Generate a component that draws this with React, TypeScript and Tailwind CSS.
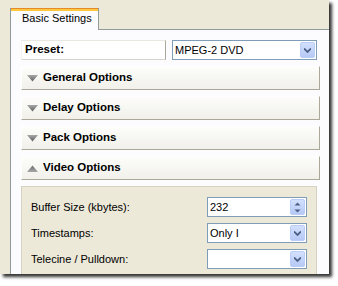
import React from 'react'

const font = { fontFamily: '"Liberation Sans", Arial, sans-serif' }

function Chevron() {
  return (
    <svg width="7" height="5" viewBox="0 0 7 5">
      <path d="M0 0.5 L3.5 4 L7 0.5" fill="none" stroke="#4d6185" strokeWidth="1.8" />
    </svg>
  )
}

function DropButton() {
  return (
    <div className="flex h-full w-[15px] items-center justify-center rounded-[2px] border border-[#b9cdf7] bg-gradient-to-b from-[#d3e0fd] to-[#b6c9f5]">
      <Chevron />
    </div>
  )
}

function SpinButton() {
  return (
    <div className="flex h-full w-[15px] flex-col items-center justify-center gap-[3px] rounded-[2px] border border-[#b9cdf7] bg-gradient-to-b from-[#d3e0fd] to-[#b6c9f5]">
      <svg width="7" height="4" viewBox="0 0 7 4">
        <path d="M0.5 3.5 L3.5 0.5 L6.5 3.5 Z" fill="#4d6185" />
      </svg>
      <svg width="7" height="4" viewBox="0 0 7 4">
        <path d="M0.5 0.5 L3.5 3.5 L6.5 0.5 Z" fill="#4d6185" />
      </svg>
    </div>
  )
}

function Combo({ value, spin, className }: { value: string; spin?: boolean; className: string }) {
  return (
    <div className={`flex items-center border border-[#7f9db9] bg-white p-[1px] ${className}`}>
      <span className="flex-1 pl-[1px] text-[11px] leading-none text-black">{value}</span>
      {spin ? <SpinButton /> : <DropButton />}
    </div>
  )
}

function Triangle({ up }: { up?: boolean }) {
  return (
    <svg width="11" height="7" viewBox="0 0 11 7" className="shrink-0">
      <defs>
        <linearGradient id={up ? 'tu' : 'td'} x1="0" y1="0" x2="0" y2="1">
          <stop offset="0" stopColor={up ? '#6a6a6a' : '#a8a8a8'} />
          <stop offset="1" stopColor={up ? '#a8a8a8' : '#5e5e5e'} />
        </linearGradient>
      </defs>
      {up ? (
        <path d="M0 7 L5.5 0.5 L11 7 Z" fill={`url(#tu)`} />
      ) : (
        <path d="M0 0 L11 0 L5.5 6.5 Z" fill={`url(#td)`} />
      )}
    </svg>
  )
}

function Header({ title, up }: { title: string; up?: boolean }) {
  return (
    <div className="mt-[6px] flex h-[24px] items-center gap-[5px] border-t border-l border-t-white border-l-white border-r border-b border-r-[#aca899] border-b-[#aca899] bg-gradient-to-b from-[#fdfdfb] to-[#f1f0ea] pl-[5px]">
      <Triangle up={up} />
      <span className="text-[11.5px] font-bold text-black">{title}</span>
    </div>
  )
}

export default function App() {
  return (
    <div className="h-[286px] w-[338px] bg-white" style={font}>
      <div className="h-[274px] w-[329px] overflow-hidden bg-[#ece9d8] pl-[10px] pt-[8px] shadow-[3px_3px_3px_rgba(0,0,0,0.8)]">
        {/* tab strip */}
        <div className="relative z-10 flex h-[22px] w-[89px] flex-col border-x border-[#919b9c] bg-[#fcfcfe]">
          <div className="h-[3px] border-t border-[#e68b2c] bg-[#ffc83c]" />
          <div className="pl-[11px] pt-[2px] text-[11px] leading-none text-black">Basic Settings</div>
        </div>
        {/* tab pane */}
        <div className="-mt-[1px] h-[260px] w-[320px] border border-[#919b9c] bg-[#fcfcfe] pl-[10px] pr-[9px] pt-[10px]">
          <div className="flex gap-[6px]">
            <div className="flex h-[20px] w-[145px] items-center border-t border-l border-t-[#e8e7e0] border-l-[#f5f4ef] border-r border-b border-r-[#aca899] border-b-[#d8d6cc] bg-white pl-[3px]">
              <span className="text-[11.5px] font-bold text-black">Preset:</span>
            </div>
            <Combo value="MPEG-2 DVD" className="h-[20px] w-[145px]" />
          </div>
          <Header title="General Options" />
          <Header title="Delay Options" />
          <Header title="Pack Options" />
          <Header title="Video Options" up />
          <div className="mt-[6px] flex h-[100px] w-[296px] flex-col gap-[6px] border border-[#d5d2c2] bg-[#ece9d8] pl-[9px] pr-[9px] pt-[10px]">
            {[
              { label: 'Buffer Size (kbytes):', value: '232', spin: true },
              { label: 'Timestamps:', value: 'Only I' },
              { label: 'Telecine / Pulldown:', value: '' },
            ].map((r) => (
              <div key={r.label} className="flex h-[20px] items-center justify-between">
                <span className="text-[11px] text-black">{r.label}</span>
                <Combo value={r.value} spin={r.spin} className="h-[20px] w-[100px]" />
              </div>
            ))}
          </div>
        </div>
      </div>
    </div>
  )
}
